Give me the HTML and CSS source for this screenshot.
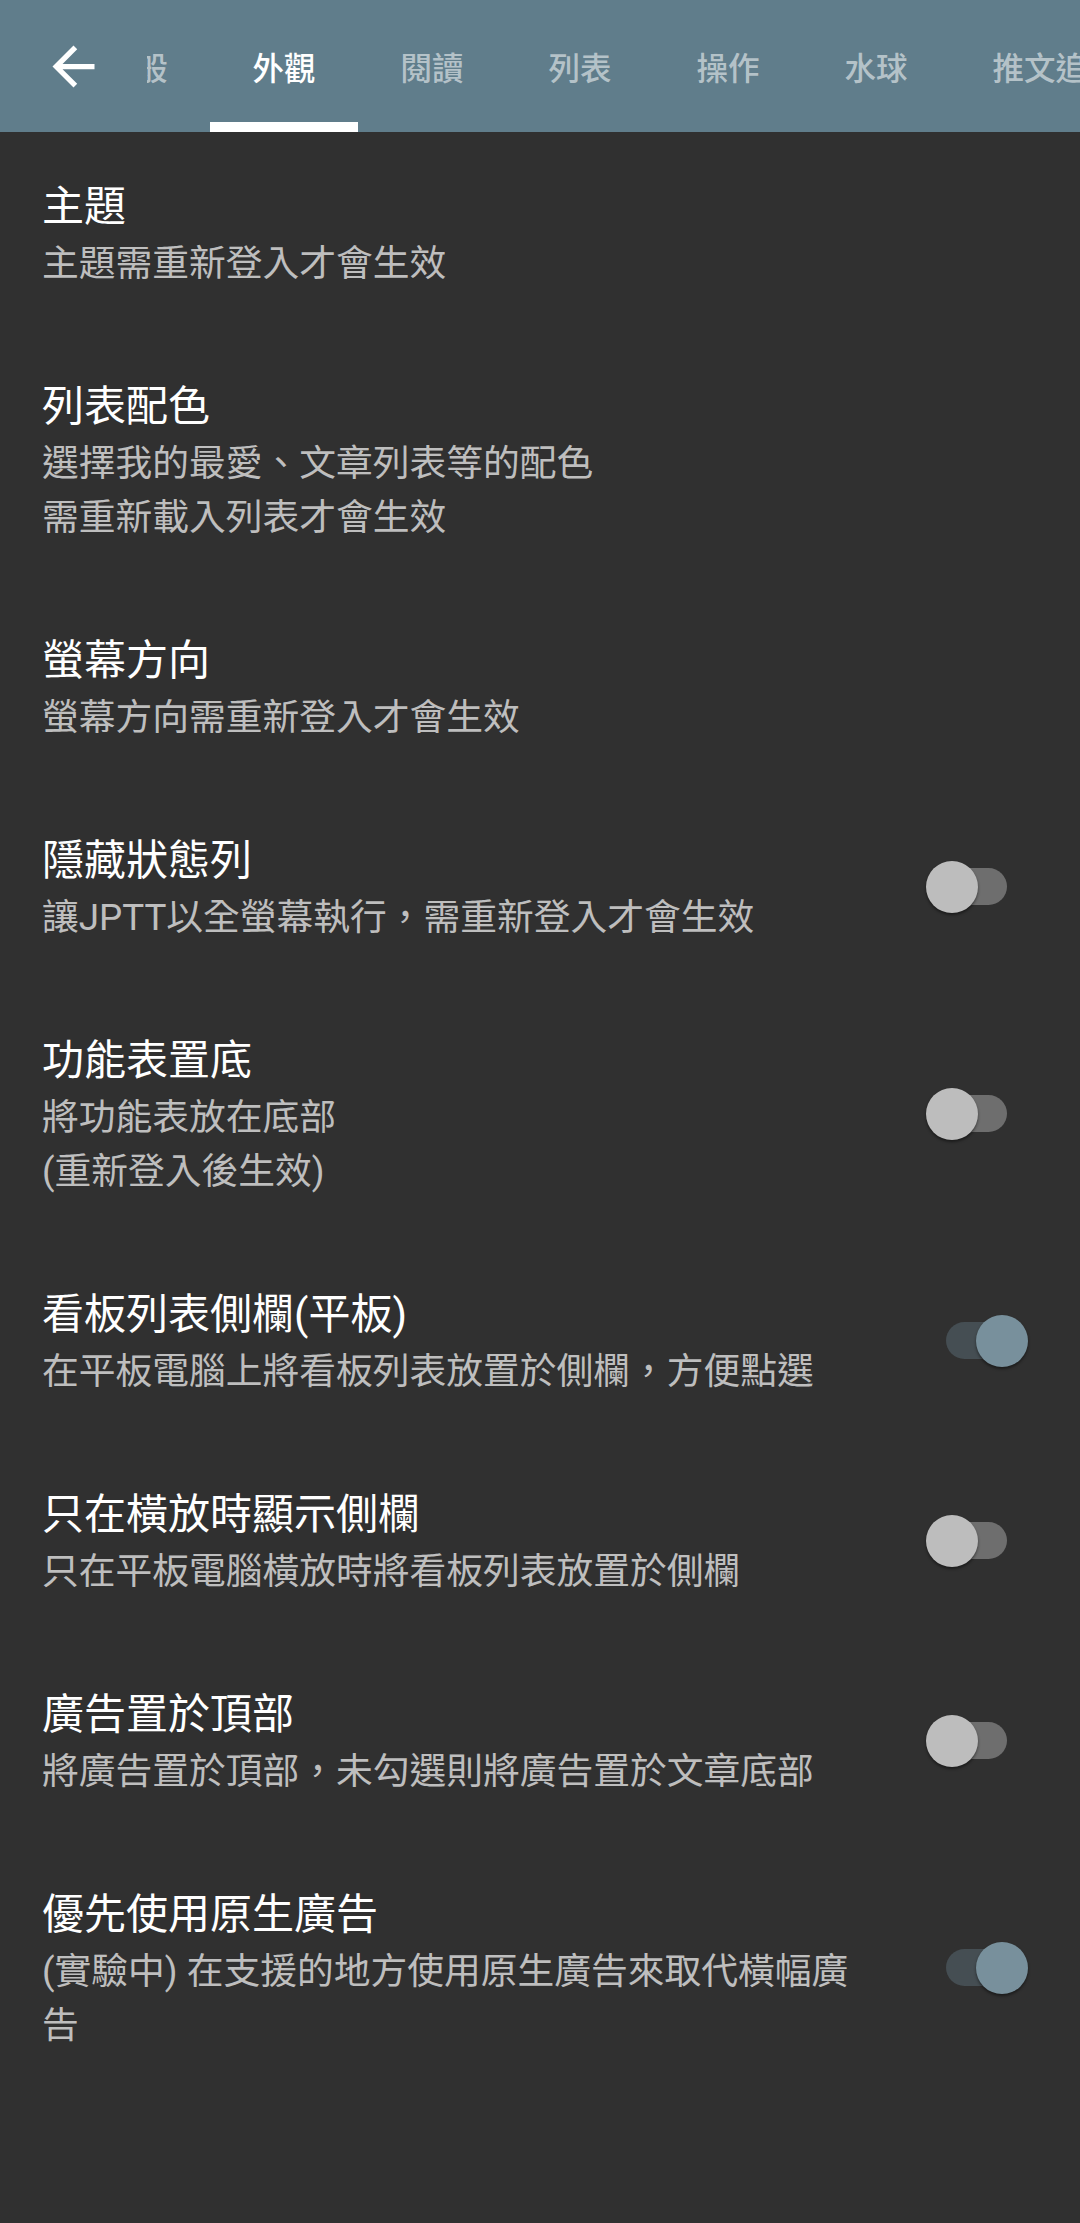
FILE: index.html
```html
<!DOCTYPE html>
<html lang="zh-Hant">
<head>
    <meta charset="UTF-8">
    <meta name="viewport" content="width=device-width, initial-scale=1.0">
    <title>設定 - 外觀</title>
    <link rel="stylesheet" href="styles.css">
</head>
<body>

    <!-- Toolbar with tabs -->
    <header class="toolbar">
        <div class="back-btn">
            <svg viewBox="0 0 24 24" width="63" height="63">
                <path fill="#fff" d="M20 11H7.83l5.59-5.59L12 4l-8 8 8 8 1.41-1.41L7.83 13H20v-2z"/>
            </svg>
        </div>
        <nav class="tab-strip">
            <div class="tab-row">
                <div class="tab">一般</div>
                <div class="tab active">外觀</div>
                <div class="tab">閱讀</div>
                <div class="tab">列表</div>
                <div class="tab">操作</div>
                <div class="tab">水球</div>
                <div class="tab">推文追蹤</div>
            </div>
        </nav>
    </header>

    <!-- Preference list -->
    <main class="pref-list">
        <div class="pref">
            <div class="pref-text">
                <div class="pref-title">主題</div>
                <div class="pref-summary">主題需重新登入才會生效</div>
            </div>
        </div>

        <div class="pref">
            <div class="pref-text">
                <div class="pref-title">列表配色</div>
                <div class="pref-summary">選擇我的最愛、文章列表等的配色<br>需重新載入列表才會生效</div>
            </div>
        </div>

        <div class="pref">
            <div class="pref-text">
                <div class="pref-title">螢幕方向</div>
                <div class="pref-summary">螢幕方向需重新登入才會生效</div>
            </div>
        </div>

        <div class="pref">
            <div class="pref-text">
                <div class="pref-title">隱藏狀態列</div>
                <div class="pref-summary">讓JPTT以全螢幕執行，需重新登入才會生效</div>
            </div>
            <div class="switch"><span class="track"></span><span class="thumb"></span></div>
        </div>

        <div class="pref">
            <div class="pref-text">
                <div class="pref-title">功能表置底</div>
                <div class="pref-summary">將功能表放在底部<br>(重新登入後生效)</div>
            </div>
            <div class="switch"><span class="track"></span><span class="thumb"></span></div>
        </div>

        <div class="pref">
            <div class="pref-text">
                <div class="pref-title">看板列表側欄(平板)</div>
                <div class="pref-summary">在平板電腦上將看板列表放置於側欄，方便點選</div>
            </div>
            <div class="switch on"><span class="track"></span><span class="thumb"></span></div>
        </div>

        <div class="pref">
            <div class="pref-text">
                <div class="pref-title">只在橫放時顯示側欄</div>
                <div class="pref-summary">只在平板電腦橫放時將看板列表放置於側欄</div>
            </div>
            <div class="switch"><span class="track"></span><span class="thumb"></span></div>
        </div>

        <div class="pref">
            <div class="pref-text">
                <div class="pref-title">廣告置於頂部</div>
                <div class="pref-summary">將廣告置於頂部，未勾選則將廣告置於文章底部</div>
            </div>
            <div class="switch"><span class="track"></span><span class="thumb"></span></div>
        </div>

        <div class="pref">
            <div class="pref-text">
                <div class="pref-title">優先使用原生廣告</div>
                <div class="pref-summary">(實驗中) 在支援的地方使用原生廣告來取代橫幅廣告</div>
            </div>
            <div class="switch on"><span class="track"></span><span class="thumb"></span></div>
        </div>
    </main>

</body>
</html>
```

FILE: styles.css
```css
body { margin: 0; background: #303030; font-family: Roboto, "Noto Sans CJK TC", sans-serif; color: #fff; }

/* toolbar + tabs */
.toolbar { display: flex; height: 132px; background: #607d8b; }
.back-btn { width: 147px; flex: none; display: flex; align-items: center; padding-left: 42px; box-sizing: border-box; }
.back-btn svg { display: block; }
.tab-strip { flex: 1; overflow: hidden; }
.tab-row { display: flex; height: 100%; margin-left: -85px; }
.tab { flex: none; display: flex; align-items: center; padding: 0 42.5px; font-size: 31.5px; font-weight: 500; color: rgba(255, 255, 255, 0.55); white-space: nowrap; }
.tab.active { color: #fff; box-shadow: inset 0 -10px 0 #fff; }

/* preference rows */
.pref { display: flex; align-items: center; padding: 45px 0 41px 42px; }
.pref-text { width: 828px; flex: none; }
.pref-title { font-size: 42px; line-height: 60px; }
.pref-summary { font-size: 36.75px; line-height: 54px; color: rgba(255, 255, 255, 0.7); }

/* switch */
.switch { position: relative; width: 117px; height: 52px; margin-left: 48px; margin-top: -3px; flex: none; }
.switch .track { position: absolute; left: 14px; top: 7.5px; width: 75px; height: 37px; border-radius: 18.5px; background: #6e6e6e; }
.switch .thumb { position: absolute; left: 8px; top: 0; width: 52px; height: 52px; border-radius: 50%; background: #bdbdbd; box-shadow: 0 2px 3px rgba(0, 0, 0, 0.45); }
.switch.on .track { left: 28px; background: #454e53; }
.switch.on .thumb { left: 58px; background: #78909c; }
```
